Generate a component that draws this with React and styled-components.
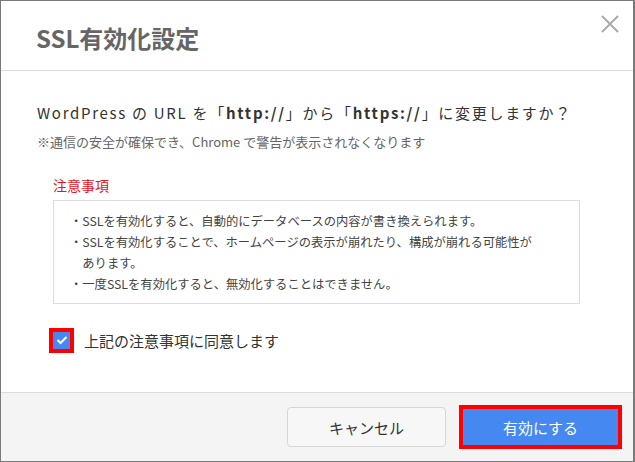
import React, { useState } from 'react';
import styled, { createGlobalStyle } from 'styled-components';

const Global = createGlobalStyle`
  html, body { margin: 0; padding: 0; background: #fff; }
  body { font-family: "Noto Sans CJK JP", "Noto Sans", sans-serif; }
`;

const Dialog = styled.div`
  width: 635px;
  height: 462px;
  box-sizing: border-box;
  border: 1px solid #7a7a7a;
  border-right-width: 2px;
  display: flex;
  flex-direction: column;
  background: #fff;
  position: relative;
`;

const Header = styled.div`
  height: 70px;
  flex-shrink: 0;
  box-sizing: border-box;
  border-bottom: 1px solid #dcdcdc;
  display: flex;
  align-items: center;
  padding: 0 35px;
`;

const Title = styled.h1`
  margin: 0;
  padding-top: 4px;
  font-size: 24px;
  font-weight: 700;
  color: #666;
`;

const Close = styled.button`
  position: absolute;
  top: 12px;
  right: 12px;
  width: 22px;
  height: 22px;
  padding: 0;
  border: 0;
  background: none;
  cursor: pointer;
`;

const Body = styled.div`
  flex: 1;
  padding: 29px 36px 0;
  color: #333;
`;

const Lead = styled.p`
  margin: 0;
  font-size: 15px;
  line-height: 26px;
  letter-spacing: 1.7px;
  white-space: nowrap;
  color: #333;
  b { font-weight: 700; }
`;

const Note = styled.p`
  margin: 6px 0 0;
  font-size: 13px;
  line-height: 20px;
  color: #666;
`;

const Caution = styled.div`
  margin: 23px 0 0 16px;
  font-size: 14px;
  line-height: 20px;
  color: #e8151b;
`;

const CautionBox = styled.ul`
  margin: 5px 17px 0 16px;
  padding: 10px 37px 8px 16px;
  list-style: none;
  border: 1px solid #dcdcdc;
  font-size: 12.3px;
  line-height: 21px;
  color: #444;
`;

const Item = styled.li`
  padding-left: 1em;
  text-indent: -1em;
`;

const Agree = styled.label`
  margin: 24px 0 0 16px;
  height: 24px;
  display: flex;
  align-items: center;
  gap: 14px;
  font-size: 15px;
  color: #333;
  cursor: pointer;
`;

const Check = styled.span`
  width: 17px;
  height: 17px;
  box-sizing: border-box;
  background: ${({ checked }) => (checked ? '#4688f1' : '#fff')};
  border: ${({ checked }) => (checked ? 'none' : '1px solid #aaa')};
  outline: 4px solid #f00;
  display: flex;
  align-items: center;
  justify-content: center;
`;

const Footer = styled.div`
  height: 69px;
  flex-shrink: 0;
  box-sizing: border-box;
  border-top: 1px solid #dcdcdc;
  background: #f4f4f4;
  display: flex;
  align-items: center;
  justify-content: flex-end;
  gap: 17px;
  padding-right: 11px;
`;

const Button = styled.button`
  height: ${({ primary }) => (primary ? '36px' : '40px')};
  width: ${({ primary }) => (primary ? '155px' : '159px')};
  box-sizing: border-box;
  border-radius: ${({ primary }) => (primary ? '0' : '4px')};
  border: ${({ primary }) => (primary ? 'none' : '1px solid #d6d6d6')};
  background: ${({ primary }) => (primary ? '#4688f1' : '#f7f7f7')};
  color: ${({ primary }) => (primary ? '#fff' : '#333')};
  outline: ${({ primary }) => (primary ? '4px solid #f00' : 'none')};
  margin-right: ${({ primary }) => (primary ? '4px' : '0')};
  font-family: inherit;
  font-size: 15px;
  cursor: pointer;
`;

export default function App() {
  const [agreed, setAgreed] = useState(true);
  return (
    <>
      <Global />
      <Dialog>
        <Header>
          <Title>SSL有効化設定</Title>
        </Header>
        <Close aria-label="close">
          <svg width="22" height="22" viewBox="0 0 22 22">
            <path d="M3 3 L19 19 M19 3 L3 19" stroke="#aaa" strokeWidth="2" fill="none" />
          </svg>
        </Close>
        <Body>
          <Lead>
            WordPress の URL を「<b>http://</b>」から「<b>https://</b>」に変更しますか？
          </Lead>
          <Note>※通信の安全が確保でき、Chrome で警告が表示されなくなります</Note>
          <Caution>注意事項</Caution>
          <CautionBox>
            <Item>・SSLを有効化すると、自動的にデータベースの内容が書き換えられます。</Item>
            <Item>・SSLを有効化することで、ホームページの表示が崩れたり、構成が崩れる可能性があります。</Item>
            <Item>・一度SSLを有効化すると、無効化することはできません。</Item>
          </CautionBox>
          <Agree onClick={() => setAgreed(!agreed)}>
            <Check checked={agreed}>
              {agreed && (
                <svg width="12" height="10" viewBox="0 0 12 10">
                  <path d="M1.5 5 L4.5 8 L10.5 2" stroke="#fff" strokeWidth="2" fill="none" />
                </svg>
              )}
            </Check>
            上記の注意事項に同意します
          </Agree>
        </Body>
        <Footer>
          <Button>キャンセル</Button>
          <Button primary>有効にする</Button>
        </Footer>
      </Dialog>
    </>
  );
}
